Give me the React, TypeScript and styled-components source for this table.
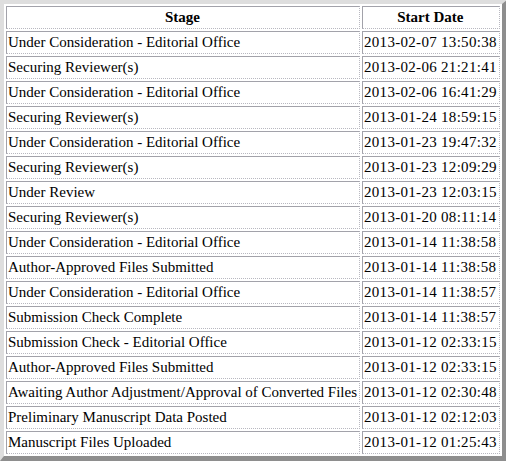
import React from "react";
import styled, { createGlobalStyle } from "styled-components";

const GlobalStyle = createGlobalStyle`
  html, body {
    margin: 0;
    padding: 0;
    background: #ffffff;
  }
  body {
    font-family: "Liberation Serif", "Times New Roman", serif;
    font-size: 15px;
    color: #000000;
  }
`;

const Table = styled.table`
  border-collapse: separate;
  border-spacing: 2px;
  border-style: solid;
  border-width: 4px 5px 5px 4px;
  border-color: #dedede #8e8e8e #8e8e8e #dedede;
  font-family: "Liberation Serif", "Times New Roman", serif;
  font-size: 15px;
`;

const cellBase = `
  padding: 1px 2px 1px 1px;
  white-space: nowrap;
  border-top: 1px solid #a2a2aa;
  border-left: 1px solid #a2a2aa;
  border-bottom: 1px dotted #b8b8c0;
  border-right: 1px dotted #b8b8c0;
  line-height: 19px;
`;

const HeadCell = styled.th`
  ${cellBase}
  font-weight: bold;
  text-align: center;
`;

const Cell = styled.td<{ $date?: boolean }>`
  ${cellBase}
  text-align: left;
  letter-spacing: ${(p) => (p.$date ? "0.3px" : "0")};
`;

const rows: [string, string][] = [
  ["Under Consideration - Editorial Office", "2013-02-07 13:50:38"],
  ["Securing Reviewer(s)", "2013-02-06 21:21:41"],
  ["Under Consideration - Editorial Office", "2013-02-06 16:41:29"],
  ["Securing Reviewer(s)", "2013-01-24 18:59:15"],
  ["Under Consideration - Editorial Office", "2013-01-23 19:47:32"],
  ["Securing Reviewer(s)", "2013-01-23 12:09:29"],
  ["Under Review", "2013-01-23 12:03:15"],
  ["Securing Reviewer(s)", "2013-01-20 08:11:14"],
  ["Under Consideration - Editorial Office", "2013-01-14 11:38:58"],
  ["Author-Approved Files Submitted", "2013-01-14 11:38:58"],
  ["Under Consideration - Editorial Office", "2013-01-14 11:38:57"],
  ["Submission Check Complete", "2013-01-14 11:38:57"],
  ["Submission Check - Editorial Office", "2013-01-12 02:33:15"],
  ["Author-Approved Files Submitted", "2013-01-12 02:33:15"],
  ["Awaiting Author Adjustment/Approval of Converted Files", "2013-01-12 02:30:48"],
  ["Preliminary Manuscript Data Posted", "2013-01-12 02:12:03"],
  ["Manuscript Files Uploaded", "2013-01-12 01:25:43"],
];

export default function App() {
  return (
    <>
      <GlobalStyle />
      <Table>
        <thead>
          <tr>
            <HeadCell>Stage</HeadCell>
            <HeadCell>Start Date</HeadCell>
          </tr>
        </thead>
        <tbody>
          {rows.map(([stage, date], i) => (
            <tr key={i}>
              <Cell>{stage}</Cell>
              <Cell $date>{date}</Cell>
            </tr>
          ))}
        </tbody>
      </Table>
    </>
  );
}
